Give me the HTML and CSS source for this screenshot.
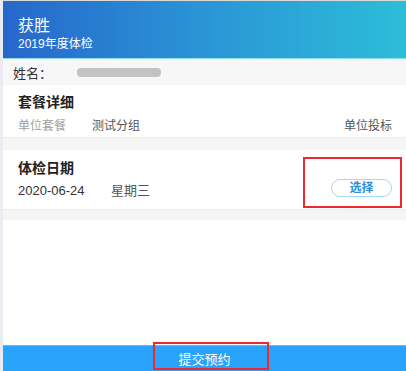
FILE: index.html
```html
<!DOCTYPE html>
<html lang="zh-CN">
<head>
    <meta charset="UTF-8">
    <meta name="viewport" content="width=device-width, initial-scale=1.0">
    <title>体检预约</title>
    <link rel="stylesheet" href="styles.css">
</head>
<body>
    <div class="app">
        <header class="banner">
            <h1>获胜</h1>
            <p>2019年度体检</p>
        </header>

        <div class="name-row">
            <span class="label">姓名：</span>
            <span class="masked"></span>
        </div>

        <section class="card package">
            <h2>套餐详细</h2>
            <div class="row">
                <span class="muted">单位套餐</span>
                <span class="value">测试分组</span>
                <span class="right">单位投标</span>
            </div>
        </section>

        <section class="card date">
            <div class="date-info">
                <h2>体检日期</h2>
                <div class="row">
                    <span class="day">2020-06-24</span>
                    <span class="week">星期三</span>
                </div>
            </div>
            <button class="pick">选择</button>
            <div class="mark mark-pick"></div>
        </section>

        <div class="filler"></div>

        <footer class="submit">
            <span>提交预约</span>
            <div class="mark mark-submit"></div>
        </footer>
    </div>
</body>
</html>
```

FILE: styles.css
```css
* {
    margin: 0;
    padding: 0;
    box-sizing: border-box;
    font-family: 'Liberation Sans', 'Noto Sans CJK SC', sans-serif;
}

html, body {
    height: 100%;
}

body {
    background: #ebebf2;
    padding-left: 3px;
    overflow: hidden;
}

.app {
    height: 100%;
    display: flex;
    flex-direction: column;
    background: #f5f5f6;
    border-top: 1px solid #d9d9d9;
}

.banner {
    height: 58px;
    padding: 16px 0 0 15px;
    background: linear-gradient(90deg, #2767cc 0%, #2a95d6 50%, #2cbdd8 100%);
    border-bottom: 1px solid #8fdcec;
    color: #fff;
}

.banner h1 {
    font-size: 16px;
    font-weight: normal;
    line-height: 18px;
}

.banner p {
    font-size: 12px;
    line-height: 14px;
    margin-top: 2px;
}

.name-row {
    height: 26px;
    display: flex;
    align-items: center;
    padding-left: 10px;
    background: #f7f7f7;
}

.name-row .label {
    font-size: 13px;
    color: #333;
    width: 64px;
}

.masked {
    width: 84px;
    height: 9px;
    border-radius: 4px;
    background: #c3c3c3;
}

.card {
    background: #fff;
    border-bottom: 1px solid #ececec;
    padding: 0 14px 0 15px;
}

.card h2 {
    font-size: 14px;
    font-weight: bold;
    color: #222;
    line-height: 16px;
}

.package {
    height: 53px;
    padding-top: 9px;
}

.package .row {
    display: flex;
    margin-top: 9px;
    font-size: 12px;
    line-height: 14px;
}

.muted {
    color: #a0a0a0;
    width: 74px;
}

.value {
    color: #555;
}

.right {
    margin-left: auto;
    color: #555;
}

.date {
    height: 60px;
    margin-top: 12px;
    position: relative;
    display: flex;
    justify-content: space-between;
    align-items: flex-end;
    padding-top: 10px;
    padding-bottom: 12px;
}

.date-info {
    align-self: flex-start;
}

.date .row {
    display: flex;
    margin-top: 7px;
    font-size: 13px;
    line-height: 15px;
    color: #333;
}

.day {
    width: 93px;
}

.week {
    color: #555;
}

.pick {
    width: 61px;
    height: 18px;
    border: 1px solid #a9d6f2;
    border-radius: 9px;
    background: #fff;
    color: #2b8fd9;
    font-size: 12px;
    font-weight: bold;
    line-height: 16px;
}

.filler {
    flex: 1;
    margin-top: 10px;
    background: #fff;
}

.submit {
    height: 26px;
    position: relative;
    display: flex;
    justify-content: center;
    align-items: center;
    background: #29a3fb;
    color: #fff;
    font-size: 13px;
    border-top: 1px solid #5cb9fb;
}

.mark {
    position: absolute;
    border: 2px solid #f0282d;
    pointer-events: none;
}

.mark-pick {
    left: 300px;
    top: 7px;
    width: 99px;
    height: 51px;
}

.mark-submit {
    left: 150px;
    top: -4px;
    width: 116px;
    height: 28px;
}
```
